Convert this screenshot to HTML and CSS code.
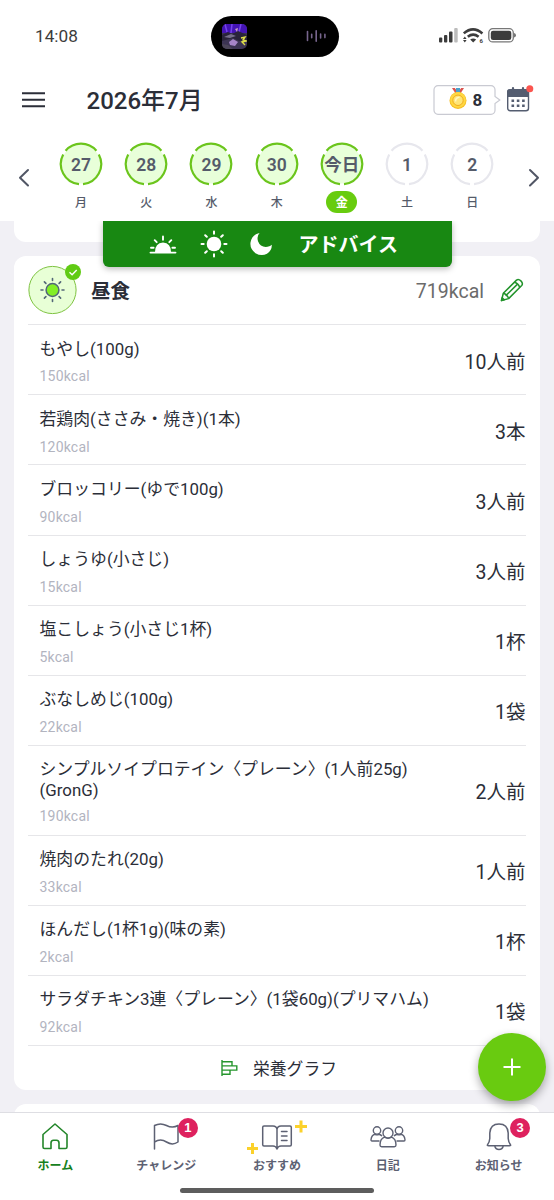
FILE: index.html
```html
<!DOCTYPE html>
<html lang="ja">
<head>
<meta charset="utf-8">
<title>食事記録</title>
<link rel="stylesheet" href="styles.css">
</head>
<body>
<svg class="defs" width="0" height="0">
  <symbol id="ring" viewBox="0 0 44 44">
    <circle cx="22" cy="22" r="19.5" class="ring-fill"/>
    <g fill="none" class="ring-line" stroke-width="2.2">
      <path d="M6.6 8.8A20.2 20.2 0 0 1 37.4 8.8"/>
      <path d="M39.8 12.4A20.3 20.3 0 0 1 24 42.1"/>
      <path d="M20 42.1A20.3 20.3 0 0 1 4.2 12.4"/>
    </g>
  </symbol>
</svg>
<div class="app">
  <div class="status">
    <span class="clock">14:08</span>
    <div class="island">
      <svg class="art" width="25" height="25" viewBox="0 0 25 25"><defs><clipPath id="ac"><rect width="25" height="25" rx="5"/></clipPath></defs><g clip-path="url(#ac)"><rect width="25" height="25" fill="#3c3453"/><rect width="25" height="9" fill="#4414b4"/><path d="M3 0l2 8M10 0l-1 9M19 0l-2 8" stroke="#7643ed" stroke-width="1.5"/><path d="M0 11l6-3 4 2 6-3 9 4v5l-8 1-6-3-11 3z" fill="#29233b"/><path d="M2 13l7-3 5 2-6 2z" fill="#77708c"/><path d="M7 18l4-3 5 3-3 4-5-1z" fill="#a685c8"/><path d="M0 20l6 1 5 4H0z" fill="#4b4558"/><path d="M13 5l3-1-1 4z" fill="#c8a1bf"/><path d="M19 14l4-1-2 3 3 1-4 1 3 3" fill="none" stroke="#dede48" stroke-width="1.4"/></g></svg>
      <svg class="wave" width="22" height="12" viewBox="0 0 22 12"><path d="M1.5 1.5v9M5.7 4.3v3.4M10.2.8v10.4M14.6 4v4M18.9 4.4v3.2" stroke="#77658d" stroke-width="1.6" stroke-linecap="round"/></svg>
    </div>
    <svg class="signals" width="78" height="18" viewBox="0 0 78 18">
      <g fill="#3c3c3c"><rect x="0" y="10.5" width="3.3" height="5" rx="1"/><rect x="5" y="8" width="3.3" height="7.5" rx="1"/><rect x="10" y="4.5" width="3.5" height="11" rx="1"/><rect x="15.2" y="1" width="3.5" height="14.5" rx="1" fill="#bcbcbc"/>
      <path d="M34.2 15.5l-3-3q3-2.200 6 0z"/><path d="M24 12l1.800-2.600 1.800 2.600zM24 13l1.800 2.600 1.800-2.600z"/></g>
      <path d="M24.800 6.400q9.200-8.200 18.600 0M28.800 9.800q5.300-4.300 10.800 0" fill="none" stroke="#3c3c3c" stroke-width="2.600"/>
      <text x="40.400" y="15.800" class="wifi-gen">6</text>
      <rect x="49.800" y="1.700" width="24.500" height="13.200" rx="4" fill="none" stroke="#777" stroke-width="1.300"/><rect x="51.800" y="3.700" width="20.500" height="9.200" rx="2.200" fill="#3c3c3c"/><path d="M75 6q2 .5 2 2.300t-2 2.300z" fill="#777"/>
    </svg>
  </div>

  <header class="header">
    <svg class="menu" width="23" height="16" viewBox="0 0 23 16"><path d="M0 1.300h23M0 7.800h23M0 14.300h23" stroke="#2b2e38" stroke-width="2"/></svg>
    <h1 class="month">2026年7月</h1>
    <div class="points">
      <svg class="bubble" width="69" height="30" viewBox="0 0 69 30"><path d="M5 .7h53a4 4 0 0 1 4 4v6.800l4.800 3.500-4.800 3.500v6.800a4 4 0 0 1-4 4H5a4 4 0 0 1-4-4V4.700a4 4 0 0 1 4-4z" fill="#fff" stroke="#c9cad2" stroke-width="1.200"/></svg>
      <svg class="medal" width="18" height="22" viewBox="0 0 18 22"><path d="M3 0L6.500 5.500 8.500 3.500 5.800 0z" fill="#d9534f"/><path d="M15 0l-3.500 5.500-2-2L12.200 0z" fill="#d9534f"/><path d="M7 0h4v4H7z" fill="#4ba1cb"/><circle cx="9" cy="12.500" r="8.500" fill="#f6bd22"/><circle cx="9" cy="12" r="7.800" fill="#ffd842"/><circle cx="9" cy="12.300" r="5.200" fill="#ffe577" stroke="#f2ae1c"/><path d="M6.500 13.500q0-4 4-4.200" fill="none" stroke="#fff7c2" stroke-width="1.600"/></svg>
      <b class="count">8</b>
    </div>
    <svg class="calendar" width="28" height="28" viewBox="0 0 28 28"><rect x="1.700" y="5" width="20.800" height="20.800" rx="2.500" fill="#fff" stroke="#545d70" stroke-width="1.400"/><path d="M1 12V7a3 3 0 0 1 3-3h16a3 3 0 0 1 3 3v5z" fill="#545d70"/><path d="M7 3v4M17 3v4" stroke="#545d70" stroke-width="2.200" stroke-linecap="round"/><path d="M5.500 15.800h2.600m2.700 0h2.600m2.700 0h2.600M5.500 20.800h2.600m2.700 0h2.600m2.700 0h2.600" stroke="#545d70" stroke-width="2.400"/><circle cx="23.800" cy="3.700" r="3.500" fill="#fb554f"/></svg>
  </header>

  <div class="week">
    <svg class="prev" width="12" height="20" viewBox="0 0 12 20"><path d="M10 2L2 9.700 10 17.500" fill="none" stroke="#515665" stroke-width="2" stroke-linecap="round" stroke-linejoin="round"/></svg>
    <div class="days">
      <div class="day done"><div class="circle"><svg><use href="#ring"/></svg><b>27</b></div><span>月</span></div>
      <div class="day done"><div class="circle"><svg><use href="#ring"/></svg><b>28</b></div><span>火</span></div>
      <div class="day done"><div class="circle"><svg><use href="#ring"/></svg><b>29</b></div><span>水</span></div>
      <div class="day done"><div class="circle"><svg><use href="#ring"/></svg><b>30</b></div><span>木</span></div>
      <div class="day done today"><div class="circle"><svg><use href="#ring"/></svg><b>今日</b></div><span>金</span></div>
      <div class="day"><div class="circle"><svg><use href="#ring"/></svg><b>1</b></div><span>土</span></div>
      <div class="day"><div class="circle"><svg><use href="#ring"/></svg><b>2</b></div><span>日</span></div>
    </div>
    <svg class="next" width="12" height="20" viewBox="0 0 12 20"><path d="M2 2l8 7.700-8 7.800" fill="none" stroke="#515665" stroke-width="2" stroke-linecap="round" stroke-linejoin="round"/></svg>
  </div>

  <main class="content">
    <div class="advice">
      <svg width="28" height="28" viewBox="0 0 28 28"><g stroke="#fff" stroke-width="1.900" stroke-linecap="round"><path d="M1.500 22.600h25M2 17.800h2.600M23.400 17.800H26M5.700 10.200l2 2M22.300 10.200l-2 2M14 6.500v3.200"/></g><path d="M6 22q0-9 8-9.500 8 .5 8 9.500z" fill="#fff"/></svg>
      <svg width="28" height="28" viewBox="0 0 28 28"><circle cx="14" cy="14" r="7.300" fill="#fff"/><path d="M14 1.500v2.200M14 24.300v2.200M1.500 14h2.200M24.300 14h2.200M5.200 5.200l1.600 1.600M21.200 21.200l1.600 1.600M5.200 22.800l1.600-1.600M21.200 6.800l1.600-1.600" stroke="#fff" stroke-width="2" stroke-linecap="round"/></svg>
      <svg width="28" height="28" viewBox="0 0 28 28"><path d="M12.600 3Q9.500 6 11 11.300q2.500 6.500 9.500 5.500 3-.7 4.300-2Q25 20.500 20 23.700q-5.500 3-11.500-.5Q2.700 19 3.500 12.600 4.800 4.500 12.600 3z" fill="#fff"/></svg>
      <b>アドバイス</b>
    </div>
    <section class="card before"></section>
    <section class="card meal">
      <div class="meal-head">
        <div class="meal-icon">
          <svg width="50" height="52" viewBox="0 0 50 52"><circle cx="24.500" cy="28" r="23.600" fill="#e8ffd6" stroke="#7fc342"/><circle cx="24.500" cy="28" r="6.400" fill="#83ef26" stroke="#536778" stroke-width="1.500"/><path d="M24.500 16.500v2M24.500 37.500v2M13 28h2M34 28h2M16.400 19.900l1.500 1.500M31.100 34.600l1.500 1.500M16.400 36.100l1.500-1.500M31.100 21.400l1.500-1.500" stroke="#536778" stroke-width="1.600" stroke-linecap="round"/><circle cx="45" cy="10" r="8" fill="#60cb13"/><path d="M41.500 10.300l2.600 2.400 4.600-4.700" fill="none" stroke="#fff" stroke-width="1.400"/></svg>
        </div>
        <h2>昼食</h2>
        <span class="total">719kcal</span>
        <svg class="pencil" width="24" height="24" viewBox="0 0 24 24"><g fill="none" stroke="#22932b" stroke-width="1.500" stroke-linejoin="round"><path d="M1.500 22.500l1.800-7.200L16.500 2.100q2-1.500 4.400.8 2.500 2.500.8 4.600L8.600 20.600z"/><path d="M14.500 4.200q3.800 1 5.200 5.200M3.300 15.300q4 1 5.300 5.300M5.600 17.900L17 6.600M1.500 22.500l.7-2.800 2 2z"/></g></svg>
      </div>
      <div class="row"><div class="food"><p>もやし(100g)</p><small>150kcal</small></div><span>10人前</span></div>
      <div class="row"><div class="food"><p>若鶏肉(ささみ・焼き)(1本)</p><small>120kcal</small></div><span>3本</span></div>
      <div class="row"><div class="food"><p>ブロッコリー(ゆで100g)</p><small>90kcal</small></div><span>3人前</span></div>
      <div class="row"><div class="food"><p>しょうゆ(小さじ)</p><small>15kcal</small></div><span>3人前</span></div>
      <div class="row"><div class="food"><p>塩こしょう(小さじ1杯)</p><small>5kcal</small></div><span>1杯</span></div>
      <div class="row"><div class="food"><p>ぶなしめじ(100g)</p><small>22kcal</small></div><span>1袋</span></div>
      <div class="row tall"><div class="food"><p>シンプルソイプロテイン〈プレーン〉(1人前25g)<br>(GronG)</p><small>190kcal</small></div><span>2人前</span></div>
      <div class="row"><div class="food"><p>焼肉のたれ(20g)</p><small>33kcal</small></div><span>1人前</span></div>
      <div class="row"><div class="food"><p>ほんだし(1杯1g)(味の素)</p><small>2kcal</small></div><span>1杯</span></div>
      <div class="row"><div class="food"><p>サラダチキン3連〈プレーン〉(1袋60g)(プリマハム)</p><small>92kcal</small></div><span>1袋</span></div>
      <div class="graph"><svg width="17" height="16" viewBox="0 0 17 16"><path d="M1 0v16M1 1.700h10v4.200H1M1 5.900h14.800v4.200H1M1 10.100h8v4.200H1" fill="none" stroke="#25952d" stroke-width="1.400"/></svg><span>栄養グラフ</span></div>
    </section>
    <section class="card after"></section>
  </main>

  <button class="fab" aria-label="追加"><svg width="18" height="18" viewBox="0 0 18 18"><path d="M9 .5v17M.5 9h17" stroke="#fff" stroke-width="2"/></svg></button>

  <nav class="tabs">
    <a class="tab active"><svg width="36" height="32" viewBox="0 0 36 32"><path d="M6 13.500L18 3l12 10.500V26q0 1.500-1.500 1.500H22V22q0-2.800-2.500-2.800h-3Q14 19.200 14 22v5.500H7.500Q6 27.500 6 26z" fill="none" stroke="#23862a" stroke-width="1.600" stroke-linejoin="round"/></svg><span>ホーム</span></a>
    <a class="tab"><svg width="36" height="32" viewBox="0 0 36 32"><path d="M6.500 28V4.500q6-3.200 12 0t11.500 0V21q-5.500 3.800-11.500 0t-12 0" fill="none" stroke="#5d6173" stroke-width="1.500" stroke-linecap="round" stroke-linejoin="round"/></svg><i class="badge">1</i><span>チャレンジ</span></a>
    <a class="tab"><svg width="64" height="36" viewBox="0 0 64 36"><g fill="none" stroke="#5d6173" stroke-width="1.500" stroke-linejoin="round" stroke-linecap="round"><path d="M32 10.500Q31.500 7 28 7h-9q-1.300 0-1.300 1.300v17.500q0 1.200 1.300 1.200h9q3 0 4 3 1-3 4-3h9q1.300 0 1.300-1.200V8.300Q46.300 7 45 7h-9q-3.500 0-4 3.500V29M36.500 12.500H42M36.500 17H42M36.500 21.500H42"/></g><path d="M7.500 24v11M2 29.500h11M56 1.500v12M50 7.500h12" stroke="#fbd12b" stroke-width="3"/></svg><span>おすすめ</span></a>
    <a class="tab"><svg width="36" height="32" viewBox="0 0 36 32"><g fill="#fff" stroke="#5d6173" stroke-width="1.400" stroke-linejoin="round"><circle cx="7" cy="9.500" r="3.700"/><circle cx="29" cy="9.500" r="3.700"/><path d="M9.500 20H2q-1 0-1-1.300Q1.500 14 5 13.200q2 1.400 4 0 2 .5 3 2M26.500 20H34q1 0 1-1.300Q34.500 14 31 13.200q-2 1.400-4 0-2 .5-3 2"/><path d="M14.500 16.200Q10 18 10 24q0 1.700 1.700 1.700h12.600Q26 25.700 26 24q0-6-4.500-7.800-3.500 2-7 0z"/><circle cx="18" cy="12" r="5"/></g></svg><span>日記</span></a>
    <a class="tab"><svg width="36" height="32" viewBox="0 0 36 32"><g fill="none" stroke="#5d6173" stroke-width="1.500" stroke-linejoin="round"><path d="M6.500 23.800q2-2.500 2.300-6.300V12Q9.300 3 18 3t9.200 9v5.500q.3 3.800 2.300 6.300.5 1-1 1h-21q-1.500 0-1-1z"/><path d="M13.800 25q.7 3.500 4.200 3.500t4.200-3.500"/></g></svg><i class="badge">3</i><span>お知らせ</span></a>
    <div class="home-bar"></div>
  </nav>
</div>
</body>
</html>
```
FILE: styles.css
```css
* { box-sizing: border-box; }
body { margin: 0; background: #fff; font-family: Roboto, "Noto Sans CJK JP", sans-serif; color: #2b2e38; }
h1, h2, p { margin: 0; font-weight: 400; }
svg { display: block; flex: none; }
.defs { position: absolute; }
.app { position: relative; width: 554px; height: 1200px; display: flex; flex-direction: column; overflow: hidden; background: #fff; }

.status { height: 72px; flex: none; display: grid; grid-template-columns: 211px 128px 1fr; align-items: center; }
.clock { padding-left: 35px; font-size: 17.2px; color: #3c3c3c; }
.island { height: 41px; border-radius: 21px; background: #000; display: flex; align-items: center; justify-content: space-between; padding: 0 11px; }
.signals { justify-self: end; margin-right: 37px; }
.wifi-gen { font-size: 6px; font-weight: 700; fill: #3c3c3c; }

.header { height: 56px; flex: none; display: flex; align-items: center; padding-left: 22px; }
.month { margin: 2px 0 0 41.5px; width: 346.5px; font-size: 24px; line-height: 32px; font-weight: 500; }
.points { position: relative; width: 69px; height: 30px; display: flex; align-items: center; gap: 6px; padding-left: 15.5px; }
.bubble { position: absolute; left: 0; top: 0; }
.medal { margin-bottom: 2px; }
.medal, .count { position: relative; }
.count { font-size: 17px; }
.calendar { margin: 0 0 2px 4px; }

.week { height: 93px; flex: none; display: flex; align-items: flex-start; padding: 14px 14px 0 18px; }
.prev, .next { margin-top: 26px; }
.days { flex: 1; display: flex; padding-left: 18.5px; }
.day { width: 65.2px; display: flex; flex-direction: column; align-items: center; color: #555b6a; }
.circle { position: relative; width: 44px; height: 44px; display: flex; align-items: center; justify-content: center; }
.circle svg { position: absolute; left: 0; top: 0; width: 44px; height: 44px; }
.circle b { position: relative; font-size: 17.5px; font-weight: 600; line-height: 24px; padding-top: 1px; }
.day > span { margin-top: 5px; width: 31px; height: 22px; border-radius: 11px; text-align: center; font-size: 12px; line-height: 24px; font-weight: 500; }
.ring-fill { fill: var(--fill, #fff); }
.ring-line { stroke: var(--line, #e7e7ed); }
.done { --fill: #e8ffd9; --line: #6bc51c; }
.today > span { background: #68cc0f; color: #fff; font-weight: 700; }

.content { position: relative; height: 891px; flex: none; background: #f1f0f5; padding: 0 14px; display: flex; flex-direction: column; gap: 14px; overflow: hidden; }
.card { background: #fff; border-radius: 12px; flex: none; }
.before { height: 21px; border-radius: 0 0 12px 12px; }
.after { height: 80px; }
.advice { position: absolute; z-index: 2; left: 102.5px; top: 0; width: 349.5px; height: 46px; background: #188812; border-radius: 0 0 6px 6px; box-shadow: 0 2px 6px #0004; display: flex; align-items: center; padding-left: 46px; color: #fff; }
.advice svg { margin-right: 23px; }
.advice svg:nth-child(3) { margin: 0 24px 0 -4px; }
.advice b { font-size: 20px; line-height: 30px; font-weight: 700; padding-top: 1px; }

.meal { height: 834px; padding: 0 14px; }
.meal-head { height: 68.4px; display: flex; align-items: center; }
.meal-icon { width: 63px; height: 52px; margin-bottom: 4px; }
.meal-icon svg { overflow: visible; }
.meal-head h2 { font-size: 19.5px; font-weight: 700; line-height: 28px; margin-top: 4px; }
.total { margin-left: auto; font-size: 19.5px; color: #6b6b6b; margin-top: 2px; }
.pencil { margin-left: 16px; margin-right: 2px; }
.row { height: 70.05px; display: flex; justify-content: space-between; border-top: 1px solid #e6e6e9; padding: 13.6px 0 0 11.5px; }
.row.tall { height: 90px; }
.food { display: flex; flex-direction: column; }
.food p { font-size: 16.85px; line-height: 21px; }
.food small { margin-top: 7.5px; font-size: 14px; line-height: 18px; color: #b2b4bf; letter-spacing: .2px; }
.row.tall small { margin-top: 6px; }
.row > span { align-self: center; font-size: 19.5px; line-height: 28px; margin: -8px .5px 0 0; }
.graph { height: 44px; display: flex; align-items: center; justify-content: center; gap: 15px; border-top: 1px solid #e6e6e9; font-size: 16.8px; padding: 2px 0 0 4px; }

.fab { position: absolute; left: 478px; top: 1033px; width: 68px; height: 68px; border: 0; border-radius: 50%; background: #69cb10; box-shadow: 0 4px 10px #0005; display: flex; align-items: center; justify-content: center; padding: 0; z-index: 3; }
.tabs { position: relative; height: 88px; flex: none; display: flex; background: #fff; border-top: 1px solid #dedee3; }
.tab { position: relative; width: 110.8px; display: flex; flex-direction: column; align-items: center; padding-top: 6px; color: #5d6173; }
.tab svg { height: 36px; margin-bottom: 2px; overflow: visible; }
.tab span { font-size: 12px; line-height: 18px; font-weight: 700; }
.active { color: #168121; }
.badge { position: absolute; left: 67px; top: 4.5px; width: 20px; height: 20px; border-radius: 50%; background: #de215e; color: #fff; font: 700 13px/20px "Liberation Sans", sans-serif; text-align: center; }
.home-bar { position: absolute; left: 180px; top: 74.5px; width: 194px; height: 5px; border-radius: 3px; background: #5d5d5d; }
```
